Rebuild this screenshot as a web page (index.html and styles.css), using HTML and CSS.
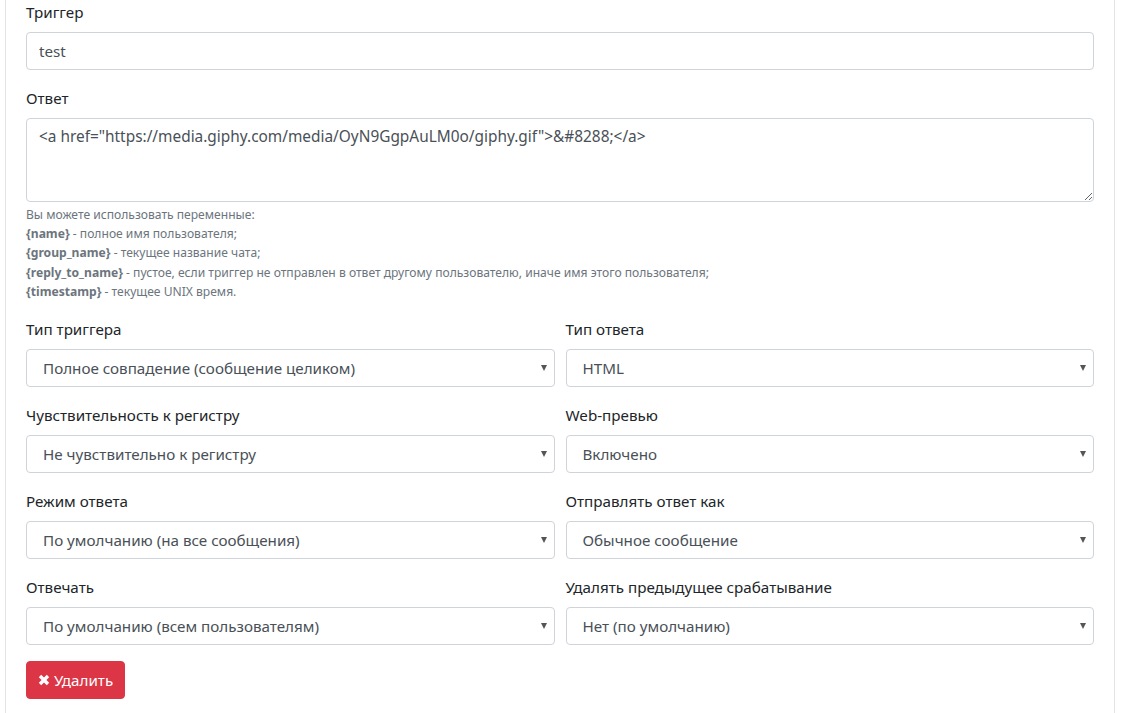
FILE: index.html
```html
<!DOCTYPE html>
<html lang="ru">
<head>
<meta charset="utf-8">
<title>Триггер</title>
<link rel="stylesheet" href="styles.css">
</head>
<body>
<div class="card">
  <div class="form-group">
    <label class="label">Триггер</label>
    <input class="control" type="text" value="test">
  </div>
  <div class="form-group">
    <label class="label">Ответ</label>
    <textarea class="control area">&lt;a href="https://media.giphy.com/media/OyN9GgpAuLM0o/giphy.gif"&gt;&amp;#8288;&lt;/a&gt;</textarea>
    <div class="help">
      <div>Вы можете использовать переменные:</div>
      <div><b>{name}</b> - полное имя пользователя;</div>
      <div><b>{group_name}</b> - текущее название чата;</div>
      <div><b>{reply_to_name}</b> - пустое, если триггер не отправлен в ответ другому пользователю, иначе имя этого пользователя;</div>
      <div><b>{timestamp}</b> - текущее UNIX время.</div>
    </div>
  </div>
  <div class="grid">
    <div class="form-group">
      <label class="label">Тип триггера</label>
      <div class="sel"><select class="control"><option>Полное совпадение (сообщение целиком)</option></select></div>
    </div>
    <div class="form-group">
      <label class="label">Тип ответа</label>
      <div class="sel"><select class="control"><option>HTML</option></select></div>
    </div>
    <div class="form-group">
      <label class="label">Чувствительность к регистру</label>
      <div class="sel"><select class="control"><option>Не чувствительно к регистру</option></select></div>
    </div>
    <div class="form-group">
      <label class="label">Web-превью</label>
      <div class="sel"><select class="control"><option>Включено</option></select></div>
    </div>
    <div class="form-group">
      <label class="label">Режим ответа</label>
      <div class="sel"><select class="control"><option>По умолчанию (на все сообщения)</option></select></div>
    </div>
    <div class="form-group">
      <label class="label">Отправлять ответ как</label>
      <div class="sel"><select class="control"><option>Обычное сообщение</option></select></div>
    </div>
    <div class="form-group">
      <label class="label">Отвечать</label>
      <div class="sel"><select class="control"><option>По умолчанию (всем пользователям)</option></select></div>
    </div>
    <div class="form-group">
      <label class="label">Удалять предыдущее срабатывание</label>
      <div class="sel"><select class="control"><option>Нет (по умолчанию)</option></select></div>
    </div>
  </div>
  <button class="btn-danger" type="button"><svg class="ico" viewBox="0 0 12 12" width="12" height="12"><path d="M0.8 3.2 L3.2 0.8 L6 3.6 L8.8 0.8 L11.2 3.2 L8.4 6 L11.2 8.8 L8.8 11.2 L6 8.4 L3.2 11.2 L0.8 8.8 L3.6 6 Z" fill="#fff"/></svg>Удалить</button>
</div>
</body>
</html>
```
FILE: styles.css
```css
html, body {
  margin: 0;
  padding: 0;
  background: #fff;
}
body {
  font-family: "Noto Sans", "Open Sans", sans-serif;
  font-size: 15.2px;
  line-height: 24px;
  color: #212529;
}
.card {
  box-sizing: border-box;
  width: 1110px;
  margin: -21px 0 0 5px;
  padding: 20px 20px 40px;
  border: 1px solid #e3e3e3;
  background: #fff;
}
.form-group {
  margin-bottom: 16px;
}
.label {
  display: block;
  margin-bottom: 8px;
}
.control {
  display: block;
  box-sizing: border-box;
  width: 100%;
  height: 38px;
  margin: 0;
  padding: 6px 12px;
  font: inherit;
  font-size: 15.2px;
  line-height: 24px;
  color: #495057;
  background: #fff;
  border: 1px solid #ced4da;
  border-radius: 4px;
  outline: none;
}
.area {
  height: 84px;
  resize: vertical;
  font-size: 15.4px;
}
select.control {
  -webkit-appearance: none;
  appearance: none;
  padding-left: 16px;
}
.sel {
  position: relative;
}
.sel::after {
  content: "";
  position: absolute;
  right: 8px;
  top: 16px;
  border-left: 3.5px solid transparent;
  border-right: 3.5px solid transparent;
  border-top: 6px solid #555;
}
.help {
  margin-top: 3px;
  font-size: 12.1px;
  line-height: 19.2px;
  color: #6c757d;
}
.help b {
  font-weight: 700;
}
.grid {
  display: grid;
  grid-template-columns: 1fr 1fr;
  column-gap: 11px;
}
.btn-danger {
  display: flex;
  align-items: center;
  gap: 4px;
  height: 38px;
  padding: 6px 11px;
  font: inherit;
  font-size: 15.2px;
  color: #fff;
  background: #dc3545;
  border: 1px solid #dc3545;
  border-radius: 4px;
}
.ico {
  display: block;
}
```
